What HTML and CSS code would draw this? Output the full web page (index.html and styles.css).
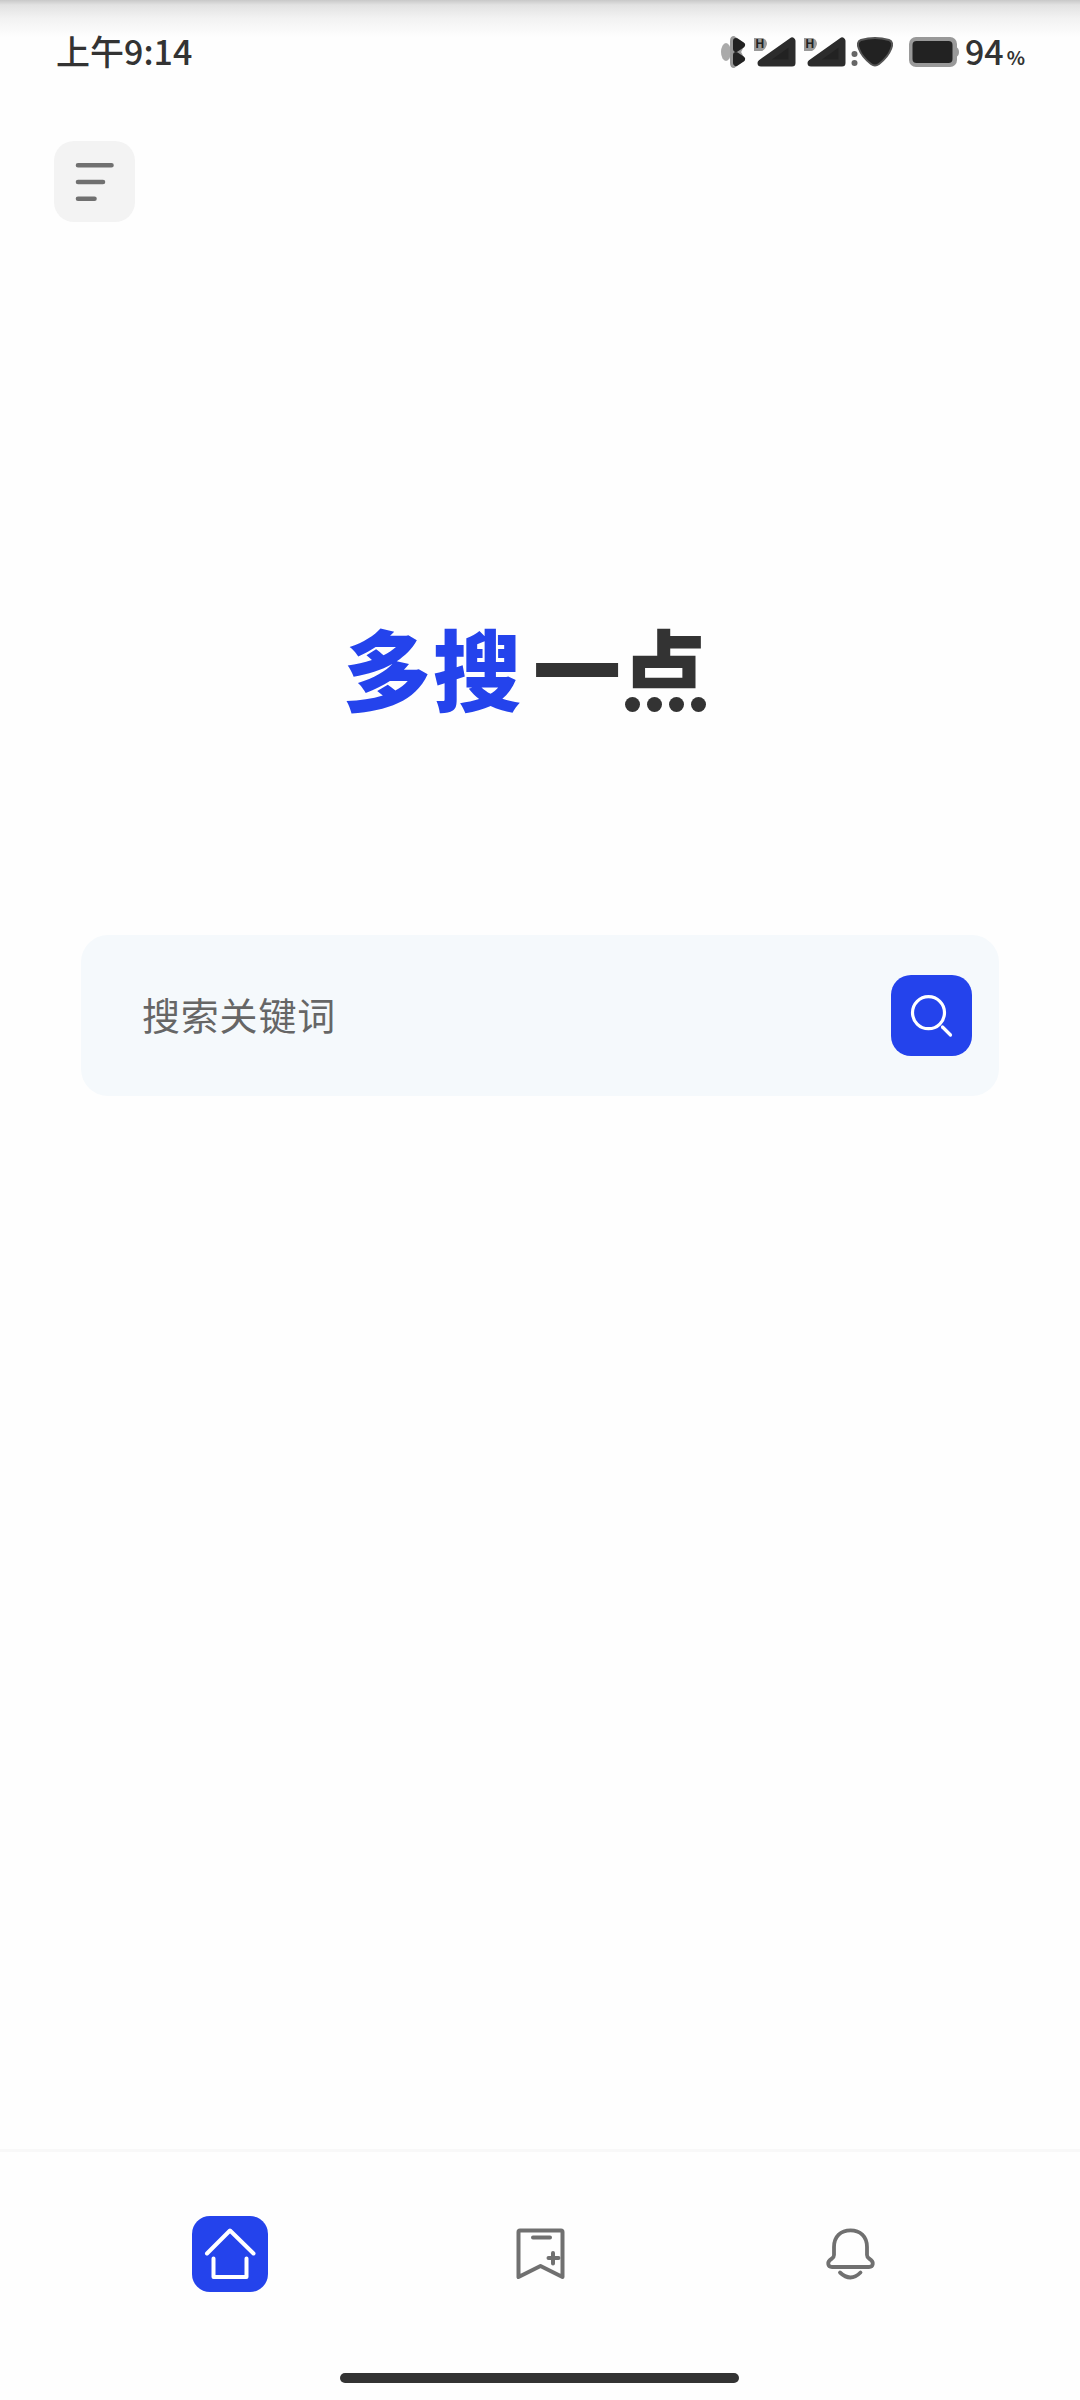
FILE: index.html
```html
<!DOCTYPE html>
<html lang="zh-CN">
<head>
    <meta charset="UTF-8">
    <meta name="viewport" content="width=device-width, initial-scale=1.0">
    <title>多搜一点</title>
    <link rel="stylesheet" href="styles.css">
</head>
<body>
    <div class="status-bar">
        <span class="time">上午9:14</span>
        <div class="status-right">
            <svg class="status-icons" width="240" height="40" viewBox="0 0 240 40">
                <!-- bluetooth -->
                <ellipse cx="6" cy="20" rx="5" ry="9" fill="#aaa"/>
                <path d="M14 5 L24 12 L20 20 L24 28 L14 35 Q11 35 11 31 V9 Q11 5 14 5Z" fill="#999" stroke="#999" stroke-width="2" stroke-linejoin="round"/>
                <path d="M16 9 L22 13 L16 17Z M16 23 L22 27 L16 31Z" fill="#222" stroke="#222" stroke-width="6" stroke-linejoin="round"/>
                <!-- signal -->
                <path d="M34 6 H43 Q47 8 47 12 Q46 17 42 19 H34Z" fill="#999"/>
                <text class="net" x="35.500" y="16">H</text>
                <path d="M72 9 V31 H41Z" class="signal"/>
                <path d="M84 6 H93 Q97 8 97 12 Q96 17 92 19 H84Z" fill="#999"/>
                <text class="net" x="85.500" y="16">H</text>
                <path d="M122 9 V31 H91Z" class="signal"/>
                <!-- wifi -->
                <circle cx="134.500" cy="22" r="3" fill="#666"/>
                <circle cx="134.500" cy="31" r="3" fill="#666"/>
                <path d="M141 8 Q155 4 169 8 Q174 10 171 17 Q168 25 159 32 Q155 35 151 32 Q142 25 139 17 Q136 10 141 8Z" fill="#222" stroke="#555" stroke-width="2"/>
                <!-- battery -->
                <rect x="189" y="5" width="48" height="30" rx="7" fill="#999"/>
                <path d="M236 15 Q239 16 239 20 Q239 24 236 25Z" fill="#999"/>
                <rect x="192.500" y="9" width="40" height="22" rx="4" fill="#222"/>
            </svg>
            <span class="battery">94<small>%</small></span>
        </div>
    </div>

    <header>
        <button class="menu-btn">
            <svg width="81" height="81" viewBox="0 0 81 81" stroke="#707070" stroke-width="4.600" stroke-linecap="round">
                <path d="M24 24.200H57.500M24 41H49M24 57.800H40.500"/>
            </svg>
        </button>
    </header>

    <main>
        <h1 class="logo">
            <span class="blue">多</span><span class="blue">搜</span><span class="one">一</span><span class="dian"><span class="dian-top">点</span><span class="dots"><i></i><i></i><i></i><i></i></span></span>
        </h1>

        <div class="search">
            <span class="placeholder">搜索关键词</span>
            <button class="search-btn">
                <svg width="81" height="81" viewBox="0 0 81 81" fill="none" stroke="#fff" stroke-width="3.200" stroke-linecap="round">
                    <circle cx="37.500" cy="37.700" r="16"/>
                    <path d="M51.500 52L59.500 60"/>
                </svg>
            </button>
        </div>
    </main>

    <nav class="tabs">
        <a class="tab active">
            <svg width="76" height="76" viewBox="0 0 76 76" fill="none" stroke="#fff" stroke-width="4" stroke-linecap="round" stroke-linejoin="round">
                <path d="M15 37.500L38 14.500L61.500 37.500M21.500 42.500V61H54.500V42.500"/>
            </svg>
        </a>
        <a class="tab">
            <svg width="76" height="76" viewBox="0 0 76 76" fill="none" stroke="#707070" stroke-width="4" stroke-linecap="round" stroke-linejoin="round">
                <path d="M16.500 61V16Q16.500 14.500 18 14.500H59Q60.500 14.500 60.500 16V61L38.500 50Z"/>
                <path d="M31 21.500H48M46.500 42H56.500M51 37V47.500"/>
            </svg>
        </a>
        <a class="tab">
            <svg width="76" height="76" viewBox="0 0 76 76" fill="none" stroke="#707070" stroke-width="3.800" stroke-linecap="round" stroke-linejoin="round">
                <path d="M22 39V31C22 20 29 14.300 38.500 14.300S55 20 55 31V39Q55 41 57 42.500C63 46 61 51 57 51H20C16 51 14 46 20 42.500Q22 41 22 39Z"/>
                <path d="M28 56.500Q38.500 66.500 48.500 56.500"/>
            </svg>
        </a>
    </nav>
    <div class="home-line"></div>
</body>
</html>
```

FILE: styles.css
```css
* {
    box-sizing: border-box;
}

body {
    display: flex;
    flex-direction: column;
    width: 1080px;
    height: 2400px;
    margin: 0;
    background: #fefefe linear-gradient(#c8c8c8 0, #e2e2e2 5px, #f2f2f2 18px, #fefefe 37px) no-repeat 0 0 / 100% 37px;
    font-family: "Noto Sans CJK SC", sans-serif;
    overflow: hidden;
}

button {
    padding: 0;
    border: none;
}

svg {
    display: block;
}

.status-bar {
    display: flex;
    justify-content: space-between;
    align-items: center;
    height: 104px;
    padding: 0 55px 0 56px;
    color: #333;
    font-size: 34px;
    font-weight: 500;
}

.time,
.battery {
    margin-bottom: 3px;
}

.status-right {
    display: flex;
    align-items: center;
    gap: 5px;
}

.battery small {
    margin-left: 3px;
    font-size: 19px;
    font-weight: 700;
}

.net {
    font: bold 12px "Liberation Sans", sans-serif;
    fill: #222;
}

.signal {
    fill: #222;
    stroke: #2c2c2c;
    stroke-width: 7;
    stroke-linejoin: round;
}

header {
    height: 118px;
    padding: 37px 54px 0;
}

.menu-btn {
    width: 81px;
    height: 81px;
    border-radius: 20px;
    background: #f3f3f3;
}

main {
    flex: 1;
}

.logo {
    display: flex;
    height: 90px;
    margin: 399px 0 0 343px;
    line-height: 90px;
    font-size: 88px;
    font-weight: 900;
    color: #333;
}

.blue {
    width: 90px;
    color: #2443ec;
}

.one {
    width: 97px;
    padding-left: 10px;
}

.dian {
    position: relative;
    width: 90px;
}

/* only the upper part of the character, the dots go under it */
.dian-top {
    display: block;
    clip-path: inset(0 0 26px 0);
    transform: scaleY(1.05);
    transform-origin: top;
}

.dots {
    position: absolute;
    left: 5px;
    bottom: -1px;
    display: flex;
    gap: 7px;
}

.dots i {
    width: 15px;
    height: 15px;
    border-radius: 50%;
    background: #333;
}

.search {
    display: flex;
    align-items: center;
    justify-content: space-between;
    height: 161px;
    margin: 224px 81px 0;
    padding: 0 27px 0 61px;
    border-radius: 27px;
    background: #f5f9fc;
}

.placeholder {
    margin-bottom: 5px;
    font-size: 38px;
    letter-spacing: .8px;
    color: #666;
}

.search-btn {
    width: 81px;
    height: 81px;
    border-radius: 20px;
    background: #2443ec;
}

.tabs {
    display: grid;
    grid-template-columns: repeat(3, 310px);
    justify-content: center;
    justify-items: center;
    height: 224px;
    padding-top: 64px;
    padding-right: 1px;
    border-top: 3px solid #f8f8f8;
}

.tab {
    width: 76px;
    height: 76px;
    border-radius: 18px;
}

.tab.active {
    background: #2443ec;
}

.home-line {
    width: 399px;
    height: 10px;
    margin: 0 0 17px 340px;
    border-radius: 5px;
    background: #333;
}
```
